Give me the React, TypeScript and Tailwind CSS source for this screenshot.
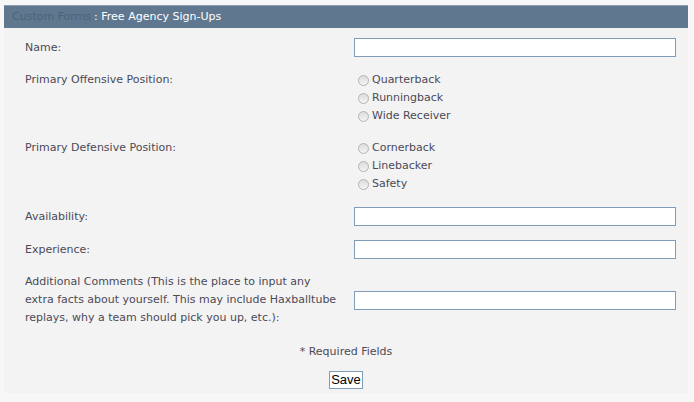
import React from 'react';

const font = { fontFamily: '"DejaVu Sans", Verdana, sans-serif' };

function Radio({ label }: { label: string }) {
  return (
    <label className="flex h-[18px] items-center">
      <span className="ml-[4px] mr-[3px] inline-block h-[11px] w-[11px] shrink-0 rounded-full border border-[#b4b4b4] bg-gradient-to-b from-[#dcdcdc] to-[#f4f4f4]" />
      <span>{label}</span>
    </label>
  );
}

function TextInput() {
  return (
    <input
      type="text"
      className="h-[19px] w-[322px] shrink-0 border border-[#7f9db9] bg-white outline-none"
    />
  );
}

function TextRow({ label }: { label: string }) {
  return (
    <div className="flex items-center py-[7px]">
      <div className="w-[350px] shrink-0 pl-[21px]">{label}</div>
      <TextInput />
    </div>
  );
}

function RadioRow({ label, options }: { label: string; options: string[] }) {
  return (
    <div className="flex items-start py-[7px]">
      <div className="w-[350px] shrink-0 pl-[21px] leading-[18px]">{label}</div>
      <div className="flex flex-col">
        {options.map((o) => (
          <Radio key={o} label={o} />
        ))}
      </div>
    </div>
  );
}

export default function App() {
  return (
    <div className="min-h-screen bg-[#f7f7f7] px-[4px] pt-[5px]" style={font}>
      <div className="w-[684px] bg-[#f3f3f3] text-[11px] leading-[18px] text-[#4b4a57]">
        <div className="flex h-[23px] items-center border-t border-[#8b9db0] bg-[#5f7890] pl-[8px] text-[11px]">
          <span className="text-[#4d6378]">Custom Forms</span>
          <span className="ml-[3px] text-white">: Free Agency Sign-Ups</span>
        </div>

        <div className="pt-[3px]">
          <TextRow label="Name:" />
          <RadioRow label="Primary Offensive Position:" options={['Quarterback', 'Runningback', 'Wide Receiver']} />
          <RadioRow label="Primary Defensive Position:" options={['Cornerback', 'Linebacker', 'Safety']} />
          <TextRow label="Availability:" />
          <TextRow label="Experience:" />
          <div className="flex items-center py-[7px]">
            <div className="w-[350px] shrink-0 pl-[21px] pr-[12px] leading-[18px]">
              Additional Comments (This is the place to input any extra facts about yourself. This may include Haxballtube replays, why a team should pick you up, etc.):
            </div>
            <TextInput />
          </div>
        </div>

        <div className="mt-[9px] text-center leading-[18px]">* Required Fields</div>
        <div className="flex justify-center pb-[4px] pt-[10px]">
          <button
            className="h-[18px] w-[34px] border border-[#7f9db9] bg-white text-[13px] leading-[16px] text-black"
            style={{ fontFamily: '"Liberation Sans", Arial, sans-serif' }}
          >
            Save
          </button>
        </div>
      </div>
    </div>
  );
}
